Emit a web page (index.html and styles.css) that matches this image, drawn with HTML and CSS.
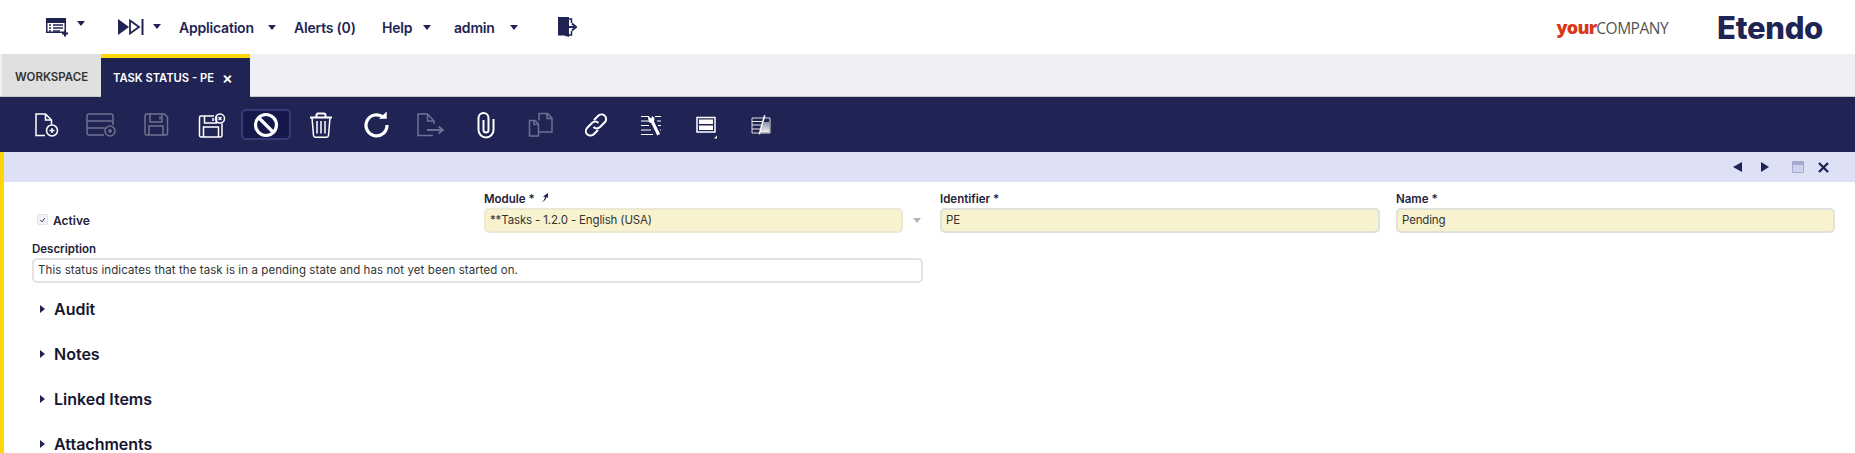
FILE: index.html
```html
<!DOCTYPE html>
<html>
<head>
    <meta charset="utf-8" />
    <title>Task Status - PE</title>
    <link rel="stylesheet" href="styles.css">
</head>
<body>
    <header class="topbar">
        <svg class="menu-icon icon-quick" width="24" height="20" viewBox="0 0 24 20">
            <path d="M1 1h20v15h-20z M1 1h20v4h-20z" fill="#202454" fill-rule="nonzero"/>
            <rect x="2.500" y="6" width="17" height="8.500" fill="#fff"/>
            <path d="M4 8h2M8 8h10M4 11h2M8 11h10M4 14h2M8 14h7" stroke="#202454" stroke-width="1.500"/>
            <path d="M17 16.500h6M20 13.500v6" stroke="#202454" stroke-width="2.200"/>
        </svg>
        <span class="caret caret-quick"></span>
        <svg class="menu-icon icon-flow" width="26" height="16" viewBox="0 0 26 16">
            <path d="M0 0l11 8-11 8z" fill="#202454"/>
            <path d="M12 1.500l9 6.500-9 6.500z" fill="none" stroke="#202454" stroke-width="1.800"/>
            <path d="M24.500 0v16" stroke="#202454" stroke-width="2"/>
        </svg>
        <span class="caret caret-flow"></span>
        <span class="menu-item item-app">Application</span>
        <span class="caret caret-app"></span>
        <span class="menu-item item-alerts">Alerts (0)</span>
        <span class="menu-item item-help">Help</span>
        <span class="caret caret-help"></span>
        <span class="menu-item item-admin">admin</span>
        <span class="caret caret-admin"></span>
        <svg class="menu-icon icon-logout" width="19" height="20" viewBox="0 0 19 20">
            <path d="M0 0h11v20l-5-1.500h-6z" fill="#202454"/>
            <path d="M11 2h2.500v4M13.500 14v4h-2.500" fill="none" stroke="#202454" stroke-width="1.500"/>
            <path d="M10 10h6M14 6.500l4 3.500-4 3.500" fill="none" stroke="#202454" stroke-width="2"/>
        </svg>
        <div class="logos">
            <span class="logo-company"><b>your</b>COMPANY</span>
            <span class="logo-etendo">Etendo</span>
        </div>
    </header>

    <nav class="tabbar">
        <div class="tab tab-workspace">WORKSPACE</div>
        <div class="tab tab-active">TASK STATUS - PE <span class="tab-close">×</span></div>
    </nav>

    <div class="toolbar">
        <button class="tool">
            <svg width="32" height="32" viewBox="0 0 32 32" class="line-icon">
                <path d="M15 26.500h-9v-21.500h9.500l6 6v4.500M15.500 5v6h6"/>
                <circle cx="22" cy="21.500" r="5.500"/>
                <path d="M19.500 21.500h5M22 19v5"/>
            </svg>
        </button>
        <button class="tool tool-off">
            <svg width="32" height="32" viewBox="0 0 32 32" class="line-icon">
                <path d="M19 26h-15a2 2 0 0 1-2-2v-17a2 2 0 0 1 2-2h22a2 2 0 0 1 2 2v9M2 12h26M2 19h18"/>
                <circle cx="25" cy="22" r="5"/>
                <path d="M23 22h4M25 20v4"/>
            </svg>
        </button>
        <button class="tool tool-off">
            <svg width="32" height="32" viewBox="0 0 32 32" class="line-icon">
                <path d="M6.500 5h18l3 3v16.500a1.500 1.500 0 0 1-1.500 1.500h-19.500a1.500 1.500 0 0 1-1.500-1.500v-18a1.500 1.500 0 0 1 1.500-1.500z"/>
                <path d="M10 5v8h12v-8M20 7.500v3M9 26v-9h14v9"/>
            </svg>
        </button>
        <button class="tool">
            <svg width="32" height="32" viewBox="0 0 32 32" class="line-icon">
                <path d="M19 7h-13a1.500 1.500 0 0 0-1.500 1.500v18a1.500 1.500 0 0 0 1.500 1.500h19.500a1.500 1.500 0 0 0 1.500-1.500v-12"/>
                <path d="M9.500 7v7h12v-7M18 9v3M8.500 28v-10h15v10"/>
                <circle cx="25" cy="9.500" r="4.500"/>
                <path d="M23.500 8l3 3M26.500 8l-3 3" stroke-width="1.200"/>
            </svg>
        </button>
        <button class="tool tool-active">
            <span class="tool-box">
                <svg width="32" height="32" viewBox="0 0 32 32" class="line-icon bold">
                    <circle cx="16" cy="16" r="10.500"/>
                    <path d="M8.500 8.500l15 15"/>
                </svg>
            </span>
        </button>
        <button class="tool">
            <svg width="32" height="32" viewBox="0 0 32 32" class="line-icon">
                <path d="M5 8.500h22M11.500 8.500v-2.500a1.500 1.500 0 0 1 1.500-1.500h6a1.500 1.500 0 0 1 1.500 1.500v2.500" stroke-width="2"/>
                <path d="M7 8.500l1.500 18a2 2 0 0 0 2 1.800h11a2 2 0 0 0 2-1.800l1.500-18M12 12v12.500M16 12v12.500M20 12v12.500"/>
            </svg>
        </button>
        <button class="tool">
            <svg width="32" height="32" viewBox="0 0 32 32" class="line-icon bold">
                <path d="M23.500 8.500a10.500 10.500 0 1 0 3.500 7.500"/>
                <path d="M19.500 9.500h7v-6.500z" fill="#fff" stroke-width="0.500"/>
            </svg>
        </button>
        <button class="tool tool-off">
            <svg width="32" height="32" viewBox="0 0 32 32" class="line-icon">
                <path d="M18 26.500h-15v-21.500h9.500l6.500 7v3M12.500 5v7h6.500"/>
                <path d="M12 21h15M23.500 17.500l4.500 3.500-4.500 3.500" stroke-width="1.800"/>
            </svg>
        </button>
        <button class="tool">
            <svg width="32" height="32" viewBox="0 0 32 32" class="line-icon bold-soft">
                <path d="M23.500 10v11a7.500 7.500 0 0 1-15 0v-12a5 5 0 0 1 10 0v12a2.500 2.500 0 0 1-5 0v-10"/>
            </svg>
        </button>
        <button class="tool tool-off">
            <svg width="32" height="32" viewBox="0 0 32 32" class="line-icon">
                <path d="M4.500 27v-15.500h5.500l3.500 3.500v12zM9 11.500v4h4.500M13.500 23h13.500v-14l-4.500-4.500h-8.500v7M22 4.500v5h5"/>
            </svg>
        </button>
        <button class="tool">
            <svg width="32" height="32" viewBox="0 0 32 32" class="line-icon bold-soft">
                <path d="M14 11l4-4a4.500 4.500 0 0 1 7 6l-5 5a4.500 4.500 0 0 1-6.500 0"/>
                <path d="M18 21l-4 4a4.500 4.500 0 0 1-7-6l5-5a4.500 4.500 0 0 1 6.500 0"/>
            </svg>
        </button>
        <button class="tool">
            <svg width="32" height="32" viewBox="0 0 32 32" class="line-icon thin">
                <path d="M6 7.500h8M6 12h7M6 16.500h8M6 21h10M6 25.500h12M20 7.500h6M22 12h4M23 16.500h3M25 21h1"/>
                <path d="M13 7l3.500 2.500.5-2.500 2.500 2-.5 3.500 6 12.500-2.800 1.500-6-12.500-2.700-1z" fill="#fff" stroke="none"/>
            </svg>
        </button>
        <button class="tool">
            <svg width="32" height="32" viewBox="0 0 32 32">
                <rect x="7" y="8.500" width="18" height="14.500" fill="none" stroke="#fff" stroke-width="1.500"/>
                <rect x="9" y="10.500" width="14" height="4.500" fill="#fff"/>
                <rect x="9" y="16.500" width="14" height="4.500" fill="#fff"/>
                <path d="M27 26.500v3h-3z" fill="#fff"/>
            </svg>
        </button>
        <button class="tool">
            <svg width="32" height="32" viewBox="0 0 32 32">
                <defs>
                    <linearGradient id="fade" x1="0" y1="0" x2="0" y2="1">
                        <stop offset="0" stop-color="#8f91a8"/>
                        <stop offset="1" stop-color="#f2f2f2"/>
                    </linearGradient>
                </defs>
                <path d="M7 9h18v15h-18z" fill="none" stroke="#ddd" stroke-width="1"/>
                <path d="M7 12.500h10M7 16h9M7 20h8" stroke="#eee" stroke-width="1"/>
                <path d="M18.500 13h6v10.500h-9z" fill="url(#fade)"/>
                <path d="M19 6l-5.500 19 1.500.500 5.500-19z" fill="#fff"/>
            </svg>
        </button>
    </div>

    <main class="window">
        <div class="statusbar">
            <span class="arrow arrow-left"></span>
            <span class="arrow arrow-right"></span>
            <span class="win-max"></span>
            <svg class="win-close" width="11" height="11" viewBox="0 0 11 11">
                <path d="M1 1l9 9M10 1l-9 9" stroke="#202454" stroke-width="2.400"/>
            </svg>
        </div>

        <form class="form-grid">
            <div class="field field-check">
                <span class="check">
                    <svg width="10" height="10" viewBox="0 0 10 10">
                        <path d="M2.500 5l2 2 3-4" fill="none" stroke="#202454" stroke-width="1"/>
                    </svg>
                </span>
                <label>Active</label>
            </div>
            <div class="field">
                <label>Module * <span class="pin">
                    <svg width="9" height="10" viewBox="0 0 9 10">
                        <path d="M1 9.500c2.500-1 3.500-3 4-5.500l-2-.5 5-3.500v5l-1.500-1c-.5 2.500-2 4.500-5.500 5.500z" fill="#202454"/>
                    </svg>
                </span></label>
                <div class="combo">
                    <div class="input required">**Tasks - 1.2.0 - English (USA)</div>
                    <span class="combo-caret"></span>
                </div>
            </div>
            <div class="field pad-right">
                <label>Identifier *</label>
                <div class="input required bordered">PE</div>
            </div>
            <div class="field">
                <label>Name *</label>
                <div class="input required bordered">Pending</div>
            </div>
            <div class="field field-wide">
                <label>Description</label>
                <div class="input bordered">This status indicates that the task is in a pending state and has not yet been started on.</div>
            </div>
        </form>

        <section class="sections">
            <div class="section"><span class="section-arrow"></span>Audit</div>
            <div class="section"><span class="section-arrow"></span>Notes</div>
            <div class="section"><span class="section-arrow"></span>Linked Items</div>
            <div class="section"><span class="section-arrow"></span>Attachments</div>
        </section>
    </main>
</body>
</html>
```

FILE: styles.css
```css
html, body {
    margin: 0;
    height: 453px;
    overflow: hidden;
}

body {
    font-family: Inter, "Open Sans", sans-serif;
    color: #202454;
    background-color: #fff;
}

.topbar {
    display: flex;
    align-items: center;
    height: 54px;
    padding-left: 45px;
    box-sizing: border-box;
}

.menu-item {
    font-size: 14px;
    font-weight: 600;
    letter-spacing: -0.200px;
    white-space: nowrap;
}

.caret {
    width: 0;
    height: 0;
    border-left: 4.500px solid transparent;
    border-right: 4.500px solid transparent;
    border-top: 5px solid #202454;
}

.caret-quick { margin-left: 8px; margin-top: -7px; }
.icon-flow { margin-left: 33px; }
.caret-flow { margin-left: 9px; margin-top: -2px; }
.item-app { margin-left: 18px; width: 77px; }
.caret-app { margin-left: 12px; }
.item-alerts { margin-left: 18px; width: 64px; }
.item-help { margin-left: 24px; width: 34px; }
.caret-help { margin-left: 7px; }
.item-admin { margin-left: 23px; width: 47px; }
.caret-admin { margin-left: 9px; }
.icon-logout { margin-left: 40px; }

.logos {
    display: flex;
    align-items: center;
    margin-left: auto;
    padding-right: 32px;
}

.logo-company {
    font-family: "Open Sans", sans-serif;
    font-size: 15.500px;
    letter-spacing: -0.500px;
    color: #555;
}

.logo-company b {
    font-size: 18px;
    font-weight: 800;
    letter-spacing: -0.800px;
    color: #d8381a;
}

.logo-etendo {
    margin-left: 49px;
    font-size: 31px;
    font-weight: 800;
    letter-spacing: -0.300px;
    color: #202454;
}

.tabbar {
    display: flex;
    height: 43px;
    padding-left: 2px;
    background-color: #eff0f5;
    border-bottom: 1px solid #c8c8cc;
    box-sizing: border-box;
}

.tab {
    display: flex;
    align-items: center;
    margin-bottom: -1px;
    font-size: 11.500px;
    font-weight: 600;
    white-space: nowrap;
    box-sizing: border-box;
}

.tab-workspace {
    width: 99px;
    padding: 3px 0 0 13px;
    background-color: #e0e0e0;
    color: #333;
    margin-bottom: 0;
}

.tab-active {
    width: 149px;
    padding-left: 12px;
    background-color: #202454;
    border-top: 4px solid #ffd60a;
    color: #fff;
    font-size: 11.200px;
}

.tab-close {
    margin-left: 8px;
    font-size: 16px;
}

.toolbar {
    display: flex;
    height: 55px;
    padding-left: 18px;
    background-color: #202454;
    box-sizing: border-box;
}

.tool {
    display: flex;
    align-items: center;
    justify-content: center;
    width: 55px;
    padding: 0;
    border: none;
    background: none;
}

.tool-off {
    opacity: 0.35;
}

.tool-box {
    display: flex;
    align-items: center;
    justify-content: center;
    width: 50px;
    height: 31px;
    background-color: #14184a;
    border: 2px solid #363b78;
    border-radius: 5px;
    box-sizing: border-box;
}

.line-icon {
    fill: none;
    stroke: #fff;
    stroke-width: 1.500;
}

.line-icon.bold { stroke-width: 3.200; }
.line-icon.bold-soft { stroke-width: 2; }
.line-icon.thin { stroke-width: 1; }

.window {
    height: 301px;
    border-left: 4px solid #ffd60a;
    box-sizing: border-box;
}

.statusbar {
    display: flex;
    align-items: center;
    height: 30px;
    padding-left: 1729px;
    background-color: #dee0f5;
    box-sizing: border-box;
}

.arrow {
    width: 0;
    height: 0;
    border-top: 5px solid transparent;
    border-bottom: 5px solid transparent;
}

.arrow-left { border-right: 9px solid #202454; }
.arrow-right { margin-left: 19px; border-left: 8px solid #202454; }

.win-max {
    width: 12px;
    height: 12px;
    margin-left: 23px;
    background-color: #d0d2ee;
    border: 1.500px solid #a7aad0;
    border-top-width: 4px;
    border-radius: 1px;
    box-sizing: border-box;
}

.win-close { margin-left: 14px; }

.form-grid {
    display: grid;
    grid-template-columns: 452px 456px 456px 439px;
    grid-template-rows: 50px 41px;
    padding: 10px 0 0 28px;
    font-size: 11.500px;
}

.field {
    display: flex;
    flex-direction: column;
    min-width: 0;
}

.field label {
    height: 16px;
    font-weight: 600;
    line-height: 15px;
    color: #22223a;
}

.pad-right { padding-right: 16px; }

.field-check {
    flex-direction: row;
    align-items: center;
    padding: 7px 0 0 5px;
    box-sizing: border-box;
}

.field-check label {
    margin-left: 5px;
    font-size: 12px;
}

.check {
    display: flex;
    align-items: center;
    justify-content: center;
    width: 11px;
    height: 11px;
    margin-top: -2px;
    background-color: #f4f4f6;
    border: 1px solid #e2e2e2;
    border-radius: 2px;
    box-sizing: border-box;
}

.pin { margin-left: 2px; }

.combo {
    display: flex;
    align-items: center;
    padding-right: 37px;
    position: relative;
}

.combo .input { flex: 1; }

.combo-caret {
    position: absolute;
    right: 19px;
    top: 10px;
    border-left: 4.500px solid transparent;
    border-right: 4.500px solid transparent;
    border-top: 5px solid #b4b4b8;
}

.input {
    height: 25px;
    padding: 0 4px;
    font-size: 11.500px;
    letter-spacing: 0.080px;
    line-height: 21px;
    color: #333;
    background-color: #fff;
    border: 2px solid #e2e2e2;
    border-radius: 5px;
    box-sizing: border-box;
    white-space: nowrap;
    overflow: hidden;
}

.required {
    letter-spacing: -0.150px;
    background-color: #f9f2cf;
    border-color: #ebe8d4;
}

.required.bordered {
    border-color: #e0e0dc;
}

.field-wide {
    grid-column: 1 / span 2;
    width: 891px;
}

.sections {
    padding: 3px 0 0 36px;
}

.section {
    display: flex;
    align-items: center;
    height: 45px;
    font-size: 16px;
    font-weight: 600;
    color: #161630;
}

.section-arrow {
    width: 0;
    height: 0;
    margin-right: 9px;
    border-top: 4.500px solid transparent;
    border-bottom: 4.500px solid transparent;
    border-left: 5px solid #202454;
}
```
